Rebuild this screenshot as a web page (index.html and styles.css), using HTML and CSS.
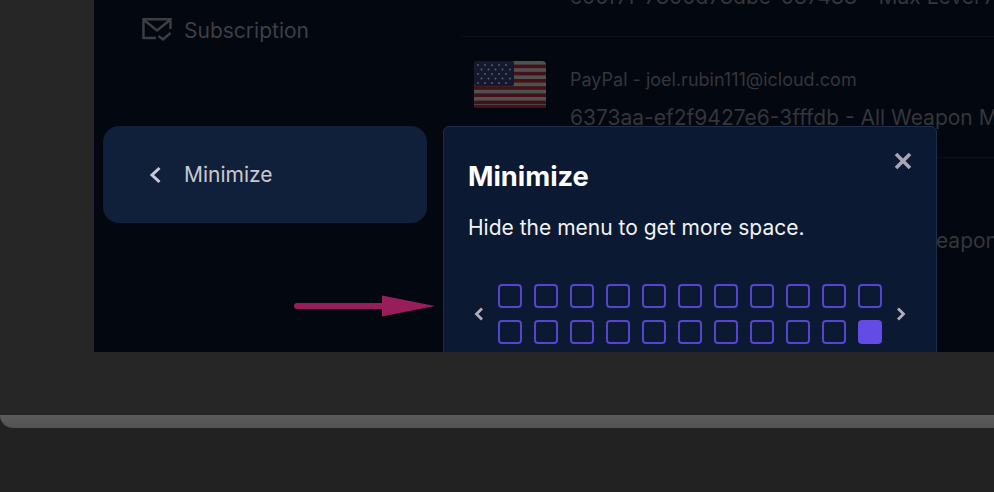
FILE: index.html
```html
<!doctype html>
<html>
  <head>
    <meta charset="UTF-8" />
    <title>Minimize tour step</title>
    <link rel="stylesheet" href="styles.css">
  </head>
  <body>
    <div class="laptop">
      <div class="screen">
        <aside class="sidebar">
          <div class="nav-item">
            <svg class="nav-icon" width="30" height="24" viewBox="0 0 30 24" fill="none" stroke="currentColor" stroke-width="2.400">
              <path d="M14 20H1.500V1.200h27V11" />
              <path d="M2 2l13 10.500L28 2" />
              <path d="M16.500 18l4.500 3.500 7.500-6.500" />
            </svg>
            <span>Subscription</span>
          </div>
          <div class="nav-item nav-active">
            <svg class="nav-chevron" width="13" height="18" viewBox="0 0 13 18" fill="none" stroke="currentColor" stroke-width="3">
              <path d="M10.500 2L3 9l7.500 7" />
            </svg>
            <span>Minimize</span>
          </div>
        </aside>
        <main class="orders">
          <div class="order">
            <div class="flag-space"></div>
            <div class="order-text">
              <div class="order-label">&nbsp;</div>
              <div class="order-value">c00f7f-7800d78dbe-087488 - Max Level All Weapon Max</div>
            </div>
          </div>
          <div class="order">
            <svg class="flag" width="72" height="47" viewBox="0 0 72 47">
              <rect width="72" height="47" rx="4" fill="#5a5a5a" />
              <g fill="#4a1419">
                <rect y="3.600" width="72" height="3.600" />
                <rect y="10.800" width="72" height="3.600" />
                <rect y="18" width="72" height="3.600" />
                <rect y="25.200" width="72" height="3.600" />
                <rect y="32.400" width="72" height="3.600" />
                <rect y="39.600" width="72" height="3.600" />
                <rect y="44" width="72" height="3" rx="1.500" />
              </g>
              <rect width="40" height="25" rx="2" fill="#171c33" />
              <g fill="#62646e">
                <circle cx="4" cy="4" r="1" /><circle cx="11" cy="4" r="1" /><circle cx="18" cy="4" r="1" /><circle cx="25" cy="4" r="1" /><circle cx="32" cy="4" r="1" />
                <circle cx="7.500" cy="8.500" r="1" /><circle cx="14.500" cy="8.500" r="1" /><circle cx="21.500" cy="8.500" r="1" /><circle cx="28.500" cy="8.500" r="1" /><circle cx="36" cy="8.500" r="1" />
                <circle cx="4" cy="13" r="1" /><circle cx="11" cy="13" r="1" /><circle cx="18" cy="13" r="1" /><circle cx="25" cy="13" r="1" /><circle cx="32" cy="13" r="1" />
                <circle cx="7.500" cy="17.500" r="1" /><circle cx="14.500" cy="17.500" r="1" /><circle cx="21.500" cy="17.500" r="1" /><circle cx="28.500" cy="17.500" r="1" /><circle cx="36" cy="17.500" r="1" />
                <circle cx="4" cy="22" r="1" /><circle cx="11" cy="22" r="1" /><circle cx="18" cy="22" r="1" /><circle cx="25" cy="22" r="1" /><circle cx="32" cy="22" r="1" />
              </g>
            </svg>
            <div class="order-text">
              <div class="order-label">PayPal - joel.rubin111@icloud.com</div>
              <div class="order-value">6373aa-ef2f9427e6-3fffdb - All Weapon Max</div>
            </div>
          </div>
          <div class="order">
            <div class="flag-space"></div>
            <div class="order-text">
              <div class="order-label">&nbsp;</div>
              <div class="order-value">6373aa-ef2f9427e6-3fffdbc0 - All Weapon</div>
            </div>
          </div>
        </main>

        <svg class="arrow" width="142" height="22" viewBox="0 0 142 22">
          <path d="M3 11H90" stroke="#981e5b" stroke-width="6" stroke-linecap="round" />
          <path d="M88 0.500L141 11 88 21.500z" fill="#981e5b" />
        </svg>

        <div class="popover">
          <svg class="popover-close" width="18" height="18" viewBox="0 0 18 18" fill="none" stroke="currentColor" stroke-width="3.600">
            <path d="M2 2l14 14M16 2l-14 14" />
          </svg>
          <h2>Minimize</h2>
          <p>Hide the menu to get more space.</p>
          <div class="pager">
            <svg width="10" height="14" viewBox="0 0 10 14" fill="none" stroke="currentColor" stroke-width="2.800">
              <path d="M8 1.500L2.500 7 8 12.500" />
            </svg>
            <div class="steps">
              <span></span><span></span><span></span><span></span><span></span><span></span><span></span><span></span><span></span><span></span><span></span>
              <span></span><span></span><span></span><span></span><span></span><span></span><span></span><span></span><span></span><span></span><span class="current"></span>
            </div>
            <svg width="10" height="14" viewBox="0 0 10 14" fill="none" stroke="currentColor" stroke-width="2.800">
              <path d="M2 1.500L7.500 7 2 12.500" />
            </svg>
          </div>
        </div>
      </div>
    </div>
    <div class="lip"></div>
  </body>
</html>
```

FILE: styles.css
```css
body,
html {
  height: 100%;
  margin: 0;
}

body {
  font-family: Inter, "Noto Sans", sans-serif;
  background-color: #222223;
  overflow: hidden;
}

.laptop {
  height: 415px;
  background: #262626;
  padding-left: 94px;
}

.lip {
  height: 13px;
  background: linear-gradient(#5c5c5c, #525252);
  border-bottom-left-radius: 14px;
}

.screen {
  position: relative;
  height: 352px;
  display: flex;
  background: #03070f;
  overflow: hidden;
}

.sidebar {
  width: 346px;
  flex-shrink: 0;
  box-sizing: border-box;
  padding: 0 13px 0 9px;
  display: flex;
  flex-direction: column;
  gap: 66px;
}

.nav-item {
  height: 60px;
  display: flex;
  align-items: center;
  padding-left: 81px;
  font-size: 21px;
  color: #3d3f44;
  white-space: nowrap;
}

.nav-item span {
  margin-left: 12px;
}

.nav-icon {
  margin-left: -42px;
}

.nav-active {
  height: 97px;
  background: #10203a;
  border-radius: 16px;
  color: #c8cad0;
}

.nav-chevron {
  margin-left: -35px;
  margin-right: 10px;
}

.orders {
  flex: 1;
  min-width: 0;
  margin-top: -84px;
  padding-left: 20px;
}

.order {
  height: 121px;
  box-sizing: border-box;
  display: flex;
  align-items: flex-start;
  padding-left: 14px;
  padding-top: 24px;
  border-bottom: 1px solid #0b0f17;
}

.order:last-child {
  padding-top: 26px;
  border-bottom: none;
}

.flag,
.flag-space {
  width: 72px;
  height: 47px;
  flex-shrink: 0;
  margin-right: 24px;
  opacity: 0.9;
}

.order-text {
  white-space: nowrap;
  color: #34363b;
}

.order-label {
  font-size: 18px;
  line-height: 20px;
  margin-top: 9px;
}

.order-value {
  font-size: 21px;
  line-height: 26px;
  margin-top: 15px;
}

.arrow {
  position: absolute;
  left: 200px;
  top: 295px;
}

.popover {
  position: absolute;
  left: 349px;
  top: 126px;
  width: 494px;
  height: 260px;
  box-sizing: border-box;
  padding: 32px 24px;
  background: #0c1932;
  border: 1px solid #1c2c4b;
  border-radius: 6px;
  color: #fff;
}

.popover-close {
  position: absolute;
  right: 24px;
  top: 25px;
  color: #a8a6b6;
}

.popover h2 {
  margin: 0;
  font-size: 27.300px;
  line-height: 36px;
  font-weight: 700;
}

.popover p {
  margin: 20px 0 0;
  font-size: 21px;
  line-height: 26px;
  color: #f2f3f5;
}

.pager {
  display: flex;
  align-items: center;
  gap: 14px;
  margin-top: 43px;
  margin-left: 5.500px;
  color: #b0aebd;
}

.steps {
  display: grid;
  grid-template-columns: repeat(11, 24px);
  gap: 12px;
}

.steps span {
  height: 24px;
  box-sizing: border-box;
  border: 2px solid #5545cf;
  border-radius: 4px;
}

.steps .current {
  background: #634ce6;
  border-color: #634ce6;
}
```
